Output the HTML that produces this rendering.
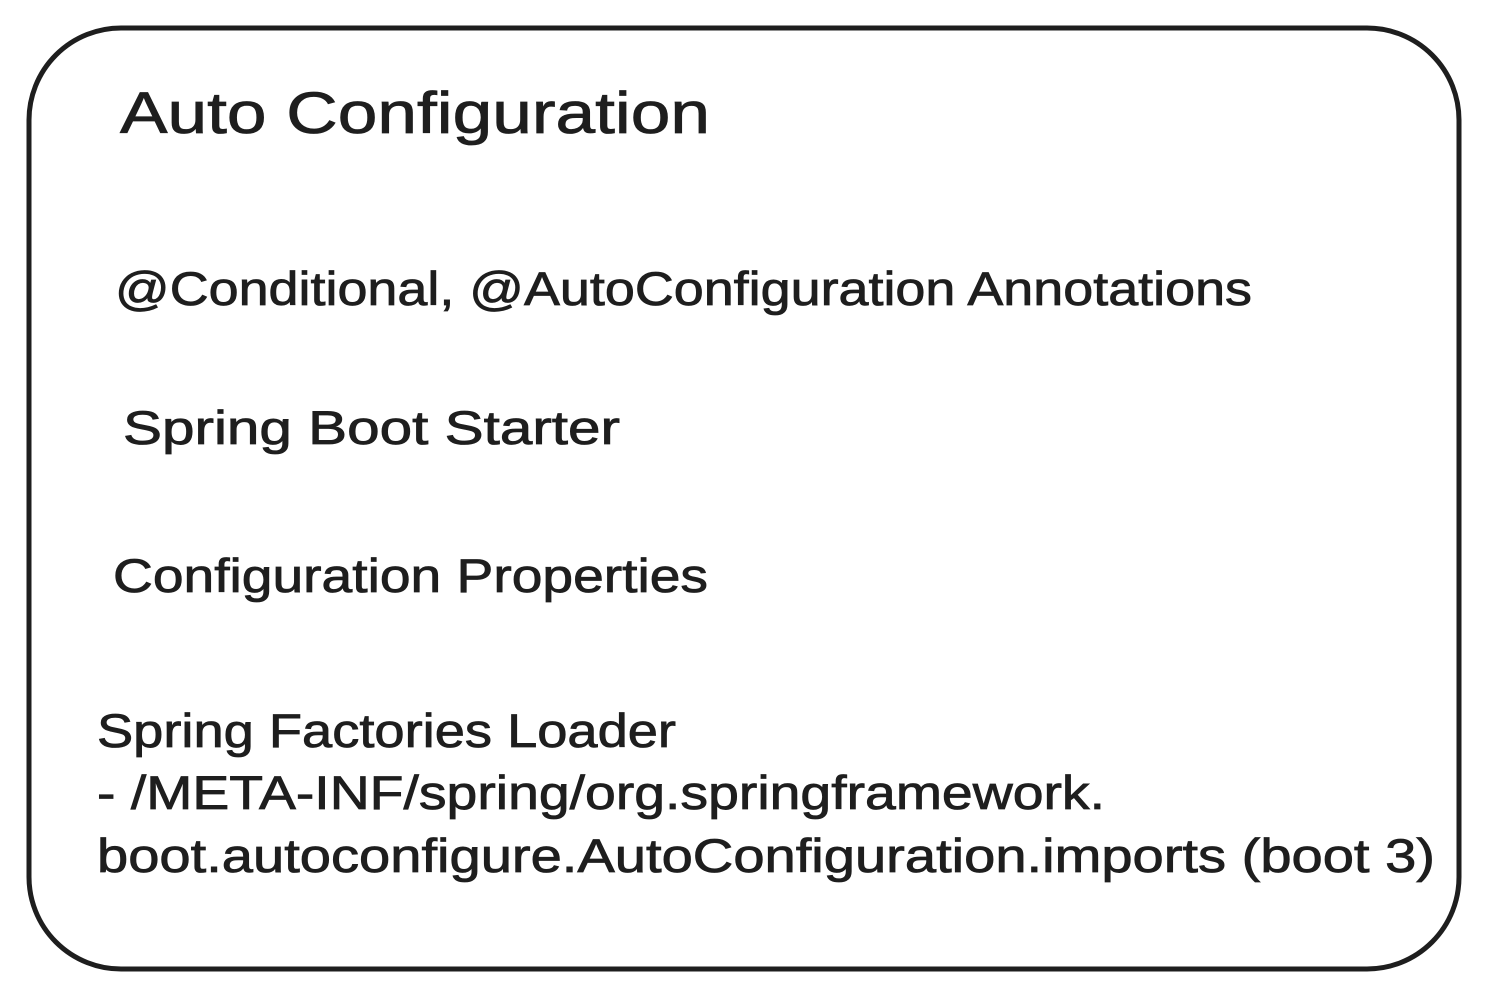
<!DOCTYPE html>
<html><head><meta charset="utf-8"><style>
html,body{margin:0;padding:0;background:#fff;}
svg{display:block;}
text{font-family:"Liberation Sans",sans-serif;fill:#1e1e1e;stroke:#1e1e1e;stroke-width:0.8;}
</style></head><body>
<svg width="1488" height="998" viewBox="0 0 1488 998" xmlns="http://www.w3.org/2000/svg">
<rect x="29" y="28" width="1430" height="941" rx="92" ry="92" fill="none" stroke="#1e1e1e" stroke-width="5"/>
<text x="120" y="133" font-size="58" textLength="590" lengthAdjust="spacingAndGlyphs">Auto Configuration</text>
<text x="115" y="305" font-size="47" textLength="1137" lengthAdjust="spacingAndGlyphs">@Conditional, @AutoConfiguration Annotations</text>
<text x="123" y="444" font-size="47" textLength="497" lengthAdjust="spacingAndGlyphs">Spring Boot Starter</text>
<text x="113" y="592" font-size="47" textLength="595" lengthAdjust="spacingAndGlyphs">Configuration Properties</text>
<text x="97" y="747" font-size="47" textLength="579" lengthAdjust="spacingAndGlyphs">Spring Factories Loader</text>
<text x="97" y="809" font-size="47" textLength="1008" lengthAdjust="spacingAndGlyphs">- /META-INF/spring/org.springframework.</text>
<text x="97" y="872" font-size="47" textLength="1338" lengthAdjust="spacingAndGlyphs">boot.autoconfigure.AutoConfiguration.imports (boot 3)</text>
</svg>
</body></html>
